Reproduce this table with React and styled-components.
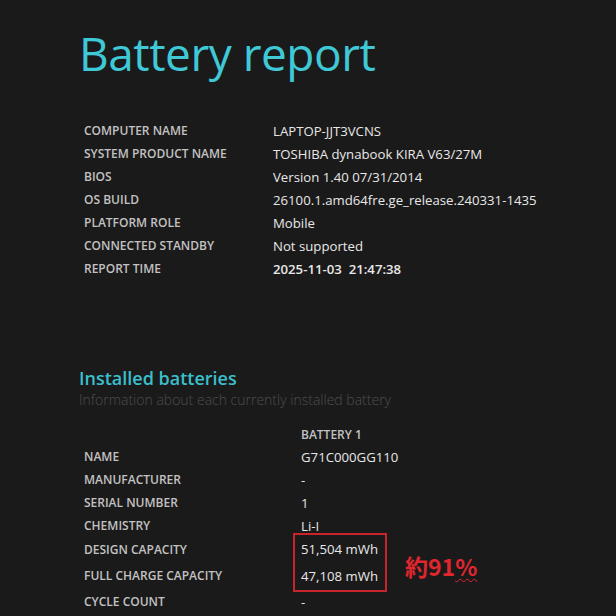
import React from "react";
import styled, { createGlobalStyle } from "styled-components";

const Global = createGlobalStyle`
  html, body { margin: 0; padding: 0; background: #1b1a1a; }
  body { font-family: "Open Sans", "Noto Sans", sans-serif; }
`;

const Page = styled.div`
  width: 616px;
  height: 616px;
  overflow: hidden;
  background: #1b1a1a;
  padding: 22px 0 0 0;
  box-sizing: border-box;
`;

const Title = styled.h1`
  margin: 0 0 0 79px;
  font-family: "Open Sans", sans-serif;
  font-weight: 400;
  font-size: 46px;
  line-height: 62px;
  letter-spacing: -0.5px;
  color: #3fc8d6;
`;

const InfoGrid = styled.div`
  display: grid;
  grid-template-columns: 189px auto;
  grid-auto-rows: 23px;
  align-items: center;
  margin-top: 35px;
  padding-left: 84px;
`;

const Label = styled.div`
  grid-column: 1;
  font-family: "Open Sans", sans-serif;
  font-weight: 600;
  font-size: 12px;
  color: #c2c2c2;
  text-transform: uppercase;
  white-space: nowrap;
`;

const Value = styled.div`
  font-family: "Open Sans", sans-serif;
  font-weight: ${(p) => (p.$strong ? 600 : 400)};
  font-size: 13.2px;
  color: #e8e8e8;
  white-space: pre;
`;

const Section = styled.section`
  margin-top: 85px;
  padding-left: 79px;
`;

const SectionTitle = styled.h2`
  margin: 0;
  font-family: "Open Sans", sans-serif;
  font-weight: 600;
  font-size: 18px;
  line-height: 26px;
  color: #3bbfcb;
`;

const SectionSub = styled.div`
  font-family: "Open Sans", sans-serif;
  font-weight: 300;
  font-size: 14px;
  line-height: 18px;
  color: #4e4d4d;
`;

const BatteryGrid = styled.div`
  display: grid;
  grid-template-columns: 217px auto;
  grid-template-rows: 22px repeat(4, 23px) 24px 29px 23px;
  align-items: center;
  margin: 14px 0 0 5px;
`;

const ColHead = styled.div`
  grid-column: 2;
  font-family: "Open Sans", sans-serif;
  font-weight: 600;
  font-size: 12px;
  color: #c2c2c2;
`;

const HighlightRow = styled.div`
  grid-column: 2;
  grid-row: 6 / span 2;
  align-self: stretch;
  display: flex;
  align-items: center;
  gap: 18px;
  margin: -4px 0 -2px -8px;
`;

const Highlight = styled.div`
  align-self: stretch;
  border: 2px solid #c9242c;
  padding: 0 7px 0 6px;
  display: grid;
  grid-template-rows: 1fr 1fr;
  align-items: center;
`;

const Note = styled.div`
  padding-top: 6px;
  font-family: "Noto Sans CJK JP", "Noto Sans", sans-serif;
  font-weight: 700;
  font-size: 23px;
  line-height: 28px;
  color: #e0262e;
  white-space: nowrap;
`;

const Squiggle = styled.span`
  text-decoration: underline wavy #e0262e;
  text-decoration-thickness: 1px;
  text-underline-offset: 2px;
`;

const info = [
  ["Computer name", "LAPTOP-JJT3VCNS"],
  ["System product name", "TOSHIBA dynabook KIRA V63/27M"],
  ["BIOS", "Version 1.40 07/31/2014"],
  ["OS build", "26100.1.amd64fre.ge_release.240331-1435"],
  ["Platform role", "Mobile"],
  ["Connected standby", "Not supported"],
  ["Report time", "2025-11-03  21:47:38", true],
];

export default function App() {
  return (
    <Page>
      <Global />
      <Title>Battery report</Title>
      <InfoGrid>
        {info.map(([l, v, s]) => (
          <React.Fragment key={l}>
            <Label>{l}</Label>
            <Value $strong={s}>{v}</Value>
          </React.Fragment>
        ))}
      </InfoGrid>
      <Section>
        <SectionTitle>Installed batteries</SectionTitle>
        <SectionSub>Information about each currently installed battery</SectionSub>
        <BatteryGrid>
          <ColHead>BATTERY 1</ColHead>
          <Label>Name</Label>
          <Value>G71C000GG110</Value>
          <Label>Manufacturer</Label>
          <Value>-</Value>
          <Label>Serial number</Label>
          <Value>1</Value>
          <Label>Chemistry</Label>
          <Value>Li-I</Value>
          <Label>Design capacity</Label>
          <HighlightRow>
            <Highlight>
              <Value>51,504 mWh</Value>
              <Value>47,108 mWh</Value>
            </Highlight>
            <Note>
              約91<Squiggle>%</Squiggle>
            </Note>
          </HighlightRow>
          <Label>Full charge capacity</Label>
          <Label>Cycle count</Label>
          <Value>-</Value>
        </BatteryGrid>
      </Section>
    </Page>
  );
}
